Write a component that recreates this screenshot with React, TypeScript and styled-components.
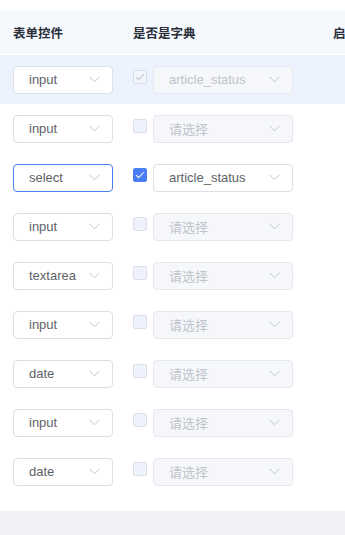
import React from 'react'
import styled, { createGlobalStyle } from 'styled-components'

const fontStack = `"Liberation Sans", "Noto Sans CJK SC", sans-serif`
const blue = '#4b7ef2'

interface RowData {
  control: string,
  dict: boolean,
  dictType?: string,
  current?: boolean,
  focused?: boolean
}

const rows: RowData[] = [
  { control: 'input', dict: true, dictType: 'article_status', current: true },
  { control: 'input', dict: false },
  { control: 'select', dict: true, dictType: 'article_status', focused: true },
  { control: 'input', dict: false },
  { control: 'textarea', dict: false },
  { control: 'input', dict: false },
  { control: 'date', dict: false },
  { control: 'input', dict: false },
  { control: 'date', dict: false },
]

const GlobalStyle = createGlobalStyle`
  html, body {
    margin: 0;
    padding: 0;
    background: #fff;
    font-family: ${fontStack};
    overflow: hidden;
  }
`

const Page = styled.div`
  width: 345px;
  height: 535px;
  display: flex;
  flex-direction: column;
  overflow: hidden;
  padding-top: 10px;
  box-sizing: border-box;
`

const Table = styled.div`
  display: flex;
  flex-direction: column;
  padding-bottom: 15px;
`

const HeaderRow = styled.div`
  display: grid;
  grid-template-columns: 120px 200px 120px;
  height: 44px;
  align-items: center;
  background: #f5f8fd;
  border-bottom: 1px solid #fff;
  white-space: nowrap;
`

const HeaderCell = styled.div`
  padding-left: 13px;
  font-size: 12.5px;
  font-weight: bold;
  color: #2b2f3a;
  font-family: "Noto Sans CJK SC", sans-serif;
`

const Row = styled.div<{ $current?: boolean }>`
  display: grid;
  grid-template-columns: 120px 200px 120px;
  height: 49px;
  align-items: center;
  background: ${p => (p.$current ? '#ecf3fe' : '#fff')};
`

const Cell = styled.div`
  padding-left: 13px;
  display: flex;
  align-items: center;
`

const Select = styled.div<{ $width: number, $disabled?: boolean, $focused?: boolean }>`
  width: ${p => p.$width}px;
  height: 28px;
  box-sizing: border-box;
  border: 1px solid ${p => (p.$focused ? blue : p.$disabled ? '#e4e7ed' : '#dcdfe6')};
  background: ${p => (p.$disabled ? '#f5f7fa' : '#fff')};
  border-radius: 4px;
  display: flex;
  align-items: center;
  justify-content: space-between;
  padding: 0 12px 0 15px;
`

const SelectText = styled.span<{ $muted?: boolean }>`
  font-size: 13px;
  color: ${p => (p.$muted ? '#c0c4cc' : '#606266')};
  white-space: nowrap;
`

const Checkbox = styled.span<{ $checked?: boolean, $disabled?: boolean }>`
  position: relative;
  width: 14px;
  height: 14px;
  box-sizing: border-box;
  border-radius: 2px;
  margin: 0 6px 5px 0;
  flex-shrink: 0;
  border: 1px solid ${p => (p.$checked && !p.$disabled ? blue : '#dcdfe6')};
  background: ${p => (p.$checked && !p.$disabled ? blue : p.$disabled && p.$checked ? '#f2f6fc' : '#edf2fc')};

  &::after {
    content: '';
    display: ${p => (p.$checked ? 'block' : 'none')};
    position: absolute;
    left: 4px;
    top: 1px;
    width: 3px;
    height: 7px;
    border: 1px solid ${p => (p.$disabled ? '#c0c4cc' : '#fff')};
    border-left: 0;
    border-top: 0;
    transform: rotate(45deg);
  }
`

function Chevron () {
  return (
    <svg width="11" height="7" viewBox="0 0 11 7">
      <polyline points="0.5,0.8 5.5,5.8 10.5,0.8" fill="none" stroke="#c0c4cc" strokeWidth="1" />
    </svg>
  )
}

const Footer = styled.div`
  flex: 1;
  background: #f0f2f5;
`

function App () {
  return (
    <Page>
      <GlobalStyle />
      <Table>
        <HeaderRow>
          <HeaderCell>表单控件</HeaderCell>
          <HeaderCell>是否是字典</HeaderCell>
          <HeaderCell>启用</HeaderCell>
        </HeaderRow>
        {rows.map((row, i) => {
          const dictDisabled = !row.dict || !!row.current
          return (
            <Row key={i} $current={row.current}>
              <Cell>
                <Select $width={100} $focused={row.focused}>
                  <SelectText>{row.control}</SelectText>
                  <Chevron />
                </Select>
              </Cell>
              <Cell>
                <Checkbox $checked={row.dict} $disabled={!!row.current || !row.dict} />
                <Select $width={140} $disabled={dictDisabled}>
                  <SelectText $muted={dictDisabled}>{row.dictType || '请选择'}</SelectText>
                  <Chevron />
                </Select>
              </Cell>
              <Cell />
            </Row>
          )
        })}
      </Table>
      <Footer />
    </Page>
  )
}

export default App
